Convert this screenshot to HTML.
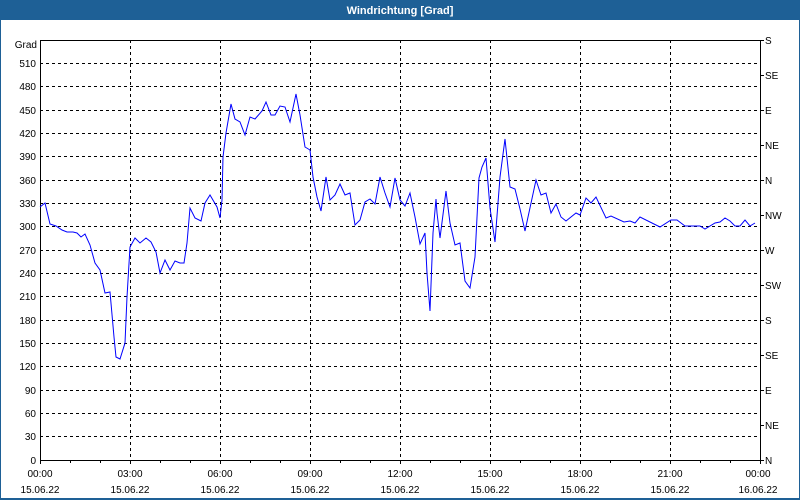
<!DOCTYPE html>
<html><head><style>
html,body{margin:0;padding:0;background:#fff;}
svg{display:block;}
text{font-family:"Liberation Sans",sans-serif;font-size:10px;fill:#000;}
</style></head><body>
<svg width="800" height="500" xmlns="http://www.w3.org/2000/svg">
<rect x="0" y="0" width="800" height="500" fill="#1e6096"/>
<rect x="1" y="20" width="798" height="478" fill="#fff"/>
<text x="400" y="14" text-anchor="middle" style="font-weight:bold;fill:#fff;font-size:11px">Windrichtung [Grad]</text>
<g stroke="#000" stroke-width="1" stroke-dasharray="3,3" shape-rendering="crispEdges">
<line x1="40" x2="760" y1="63.5" y2="63.5"/><line x1="40" x2="760" y1="86.5" y2="86.5"/><line x1="40" x2="760" y1="110.5" y2="110.5"/><line x1="40" x2="760" y1="133.5" y2="133.5"/><line x1="40" x2="760" y1="156.5" y2="156.5"/><line x1="40" x2="760" y1="180.5" y2="180.5"/><line x1="40" x2="760" y1="203.5" y2="203.5"/><line x1="40" x2="760" y1="226.5" y2="226.5"/><line x1="40" x2="760" y1="250.5" y2="250.5"/><line x1="40" x2="760" y1="273.5" y2="273.5"/><line x1="40" x2="760" y1="296.5" y2="296.5"/><line x1="40" x2="760" y1="320.5" y2="320.5"/><line x1="40" x2="760" y1="343.5" y2="343.5"/><line x1="40" x2="760" y1="366.5" y2="366.5"/><line x1="40" x2="760" y1="390.5" y2="390.5"/><line x1="40" x2="760" y1="413.5" y2="413.5"/><line x1="40" x2="760" y1="436.5" y2="436.5"/>
<line y1="40" y2="460" x1="130.5" x2="130.5"/><line y1="40" y2="460" x1="220.5" x2="220.5"/><line y1="40" y2="460" x1="310.5" x2="310.5"/><line y1="40" y2="460" x1="400.5" x2="400.5"/><line y1="40" y2="460" x1="490.5" x2="490.5"/><line y1="40" y2="460" x1="580.5" x2="580.5"/><line y1="40" y2="460" x1="670.5" x2="670.5"/>
</g>
<g stroke="#000" stroke-width="1" shape-rendering="crispEdges" fill="none">
<path d="M40.5 40.5H760.5V460.5H40.5Z"/>
<path d="M40.5 460v4M70.5 460v3M100.5 460v3M130.5 460v4M160.5 460v3M190.5 460v3M220.5 460v4M250.5 460v3M280.5 460v3M310.5 460v4M340.5 460v3M370.5 460v3M400.5 460v4M430.5 460v3M460.5 460v3M490.5 460v4M520.5 460v3M550.5 460v3M580.5 460v4M610.5 460v3M640.5 460v3M670.5 460v4M700.5 460v3M730.5 460v3M760.5 460v4"/>
<path d="M760 40.5h4M760 75.5h4M760 110.5h4M760 145.5h4M760 180.5h4M760 215.5h4M760 250.5h4M760 285.5h4M760 320.5h4M760 355.5h4M760 390.5h4M760 425.5h4M760 460.5h4"/>
</g>
<polyline fill="none" stroke="#0000ff" stroke-width="1" points="40,207 45,203 50,224 56,226 62,230 67,232 73,232 77,233 81,237 85,234 90,245 95,263 100,270 105,293 110,292 114,337 116,357 120,359 125,343 127,297 130,247 135,238 140,243 146,238 151,242 156,252 160,273 165,260 170,270 175,261 180,263 184,263 187,243 190,208 195,218 201,221 205,203 210,195 217,207 220,218 222,200 223,157 226,133 231,104 235,119 240,122 245,135 250,117 255,119 262,111 266,102 271,115 275,115 280,106 285,107 290,122 296,94 300,115 305,147 310,150 313,177 317,197 321,211 326,177 330,200 335,195 340,184 345,195 350,193 355,225 360,220 365,202 370,199 375,204 380,177 385,193 390,207 395,178 400,200 405,206 410,193 415,217 420,244 425,233 427,273 430,311 433,233 436,199 437,213 440,238 446,191 450,223 455,245 460,243 465,281 470,288 475,257 479,178 482,167 486,158 490,208 495,242 500,177 505,139 510,187 515,189 520,209 525,231 536,180 541,195 546,193 551,213 556,204 561,217 566,221 576,213 580,215 586,198 591,203 596,197 606,218 611,216 624,222 630,221 635,223 640,217 660,227 671,220 677,220 685,226 700,226 705,229 715,223 720,222 725,218 730,221 735,226 740,226 745,220 750,226 755,223"/>
<g text-anchor="end">
<text x="37" y="48">Grad</text>
<text x="36" y="67">510</text><text x="36" y="90">480</text><text x="36" y="114">450</text><text x="36" y="137">420</text><text x="36" y="160">390</text><text x="36" y="184">360</text><text x="36" y="207">330</text><text x="36" y="230">300</text><text x="36" y="254">270</text><text x="36" y="277">240</text><text x="36" y="300">210</text><text x="36" y="324">180</text><text x="36" y="347">150</text><text x="36" y="370">120</text><text x="36" y="394">90</text><text x="36" y="417">60</text><text x="36" y="440">30</text><text x="36" y="464">0</text>
</g>
<g>
<text x="765" y="44">S</text><text x="765" y="79">SE</text><text x="765" y="114">E</text><text x="765" y="149">NE</text><text x="765" y="184">N</text><text x="765" y="219">NW</text><text x="765" y="254">W</text><text x="765" y="289">SW</text><text x="765" y="324">S</text><text x="765" y="359">SE</text><text x="765" y="394">E</text><text x="765" y="429">NE</text><text x="765" y="464">N</text>
</g>
<g text-anchor="middle">
<text x="40" y="477">00:00</text><text x="40" y="493">15.06.22</text>
<text x="130" y="477">03:00</text><text x="130" y="493">15.06.22</text>
<text x="220" y="477">06:00</text><text x="220" y="493">15.06.22</text>
<text x="310" y="477">09:00</text><text x="310" y="493">15.06.22</text>
<text x="400" y="477">12:00</text><text x="400" y="493">15.06.22</text>
<text x="490" y="477">15:00</text><text x="490" y="493">15.06.22</text>
<text x="580" y="477">18:00</text><text x="580" y="493">15.06.22</text>
<text x="670" y="477">21:00</text><text x="670" y="493">15.06.22</text>
<text x="758" y="477">00:00</text><text x="758" y="493">16.06.22</text>
</g>
</svg>
</body></html>
